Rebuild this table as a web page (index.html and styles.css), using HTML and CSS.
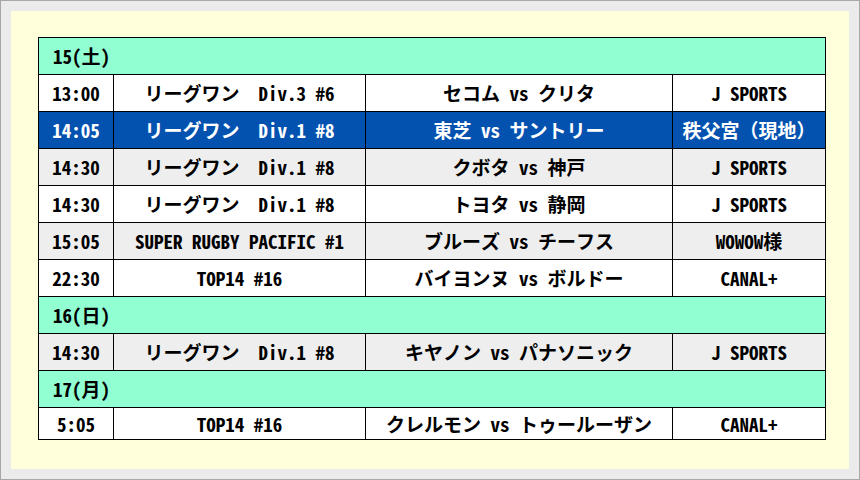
FILE: index.html
```html
<!DOCTYPE html>
<html lang="ja">
<head>
<meta charset="utf-8">
<link rel="stylesheet" href="styles.css">
</head>
<body>
<div class="panel">
<table class="sched">
<colgroup><col class="c1"><col class="c2"><col class="c3"><col class="c4"></colgroup>
<tr class="day"><td colspan="4">15(土)</td></tr>
<tr><td>13:00</td><td>リーグワン　Div.3 #6</td><td>セコム vs クリタ</td><td>J SPORTS</td></tr>
<tr class="hl"><td>14:05</td><td>リーグワン　Div.1 #8</td><td>東芝 vs サントリー</td><td>秩父宮（現地）</td></tr>
<tr class="alt"><td>14:30</td><td>リーグワン　Div.1 #8</td><td>クボタ vs 神戸</td><td>J SPORTS</td></tr>
<tr><td>14:30</td><td>リーグワン　Div.1 #8</td><td>トヨタ vs 静岡</td><td>J SPORTS</td></tr>
<tr class="alt"><td>15:05</td><td>SUPER RUGBY PACIFIC #1</td><td>ブルーズ vs チーフス</td><td>WOWOW様</td></tr>
<tr><td>22:30</td><td>TOP14 #16</td><td>バイヨンヌ vs ボルドー</td><td>CANAL+</td></tr>
<tr class="day"><td colspan="4">16(日)</td></tr>
<tr class="alt"><td>14:30</td><td>リーグワン　Div.1 #8</td><td>キヤノン vs パナソニック</td><td>J SPORTS</td></tr>
<tr class="day"><td colspan="4">17(月)</td></tr>
<tr class="last"><td>5:05</td><td>TOP14 #16</td><td>クレルモン vs トゥールーザン</td><td>CANAL+</td></tr>
</table>
</div>
</body>
</html>
```
FILE: styles.css
```css
html, body {
  margin: 0;
  padding: 0;
}
body {
  width: 860px;
  height: 480px;
  box-sizing: border-box;
  border: 1px solid #a8a8a8;
  background: #ebebeb;
  padding: 10px 10px 10px 10px;
  font-family: "Noto Sans Mono CJK JP", "Noto Sans CJK JP", sans-serif;
}
.panel {
  background: #ffffdc;
  height: 458px;
  box-sizing: border-box;
  padding: 26px 0 0 27px;
}
.sched {
  border-collapse: collapse;
  width: 787px;
  table-layout: fixed;
  font-size: 19px;
  font-weight: bold;
  color: #000;
}
.c1 { width: 75px; }
.c2 { width: 252px; }
.c3 { width: 307px; }
.c4 { width: 153px; }
.sched td {
  border: 1px solid #000;
  height: 36px;
  padding: 0;
  text-align: center;
  vertical-align: middle;
  background: #fff;
  white-space: nowrap;
  line-height: 20px;
}
.sched tr.day td {
  background: #91ffd2;
  text-align: left;
  padding-left: 14px;
}
.sched tr.alt td {
  background: #eeeeee;
}
.sched tr.hl td {
  background: #0452b0;
  color: #fff;
}
.sched tr.last td {
  height: 31px;
}
```
